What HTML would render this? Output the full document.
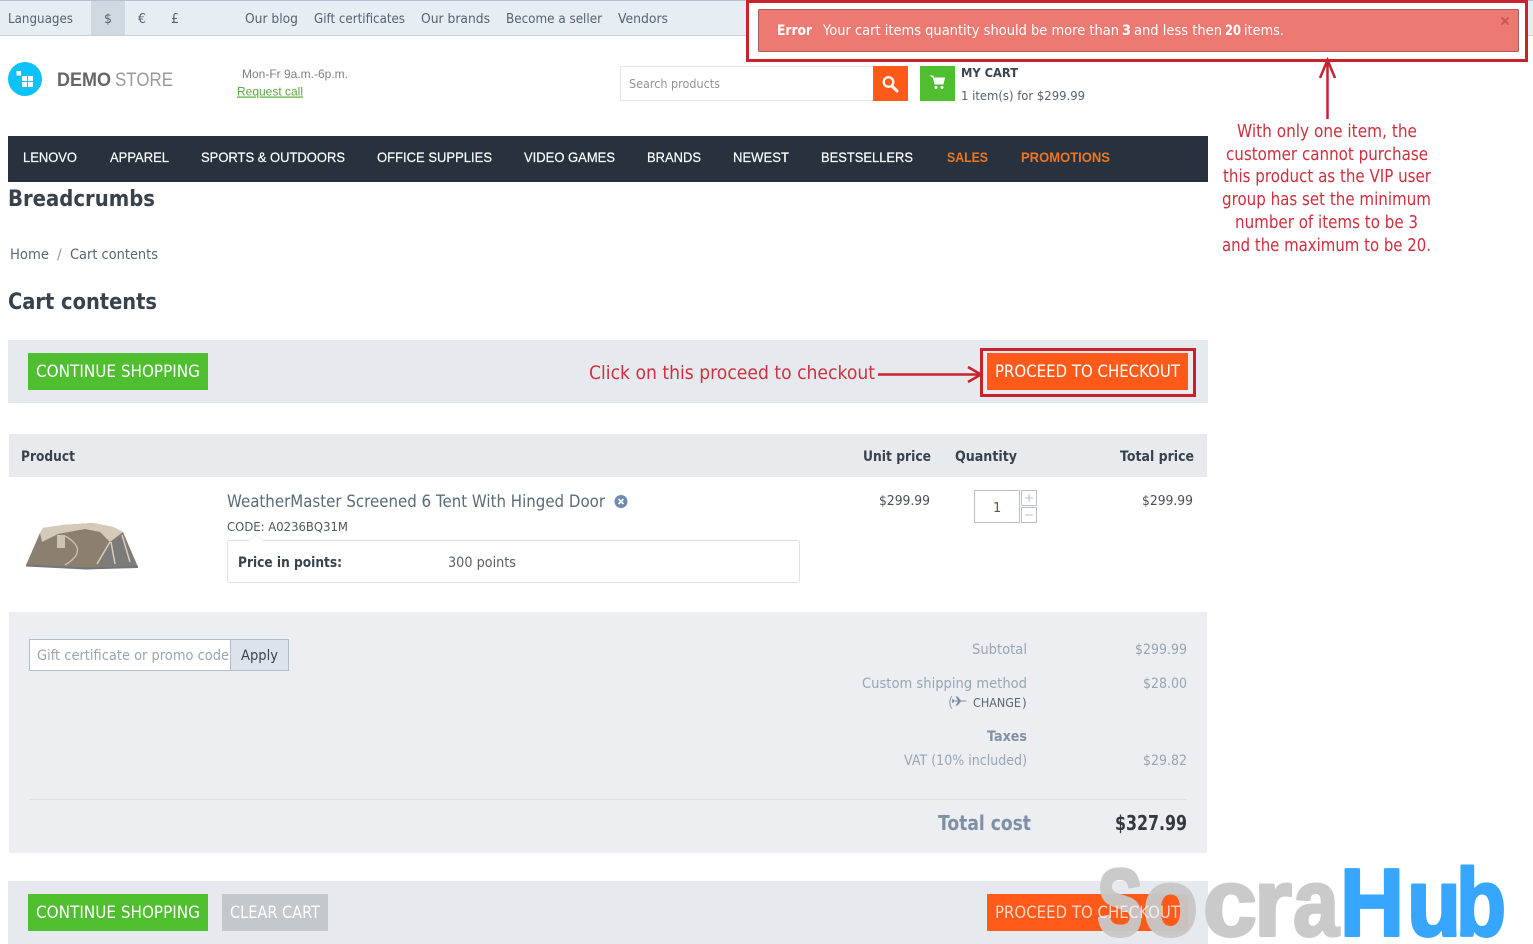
<!DOCTYPE html>
<html lang="en"><head><meta charset="utf-8"><title>Cart contents</title>
<style>
html,body{margin:0;padding:0;background:#fff;width:1533px;height:944px;overflow:hidden}
svg{display:block}
text{font-family:"DejaVu Sans",sans-serif;white-space:pre}
.l{font-family:"Liberation Sans",sans-serif}
.t{font-size:13px;fill:#56626e}
.n{font-family:"Liberation Sans",sans-serif;font-size:14px;fill:#fff;stroke:#fff;stroke-width:.2px}
.o{fill:#f0761e;stroke:#f0761e;font-weight:bold;stroke-width:0}
.b{font-weight:bold}
.btn{font-size:17px;fill:#fff}
.th{font-size:14px;font-weight:bold;fill:#37424c}
.s{font-size:14px;fill:#99a5b3}
.a{font-size:18px;fill:#cf2f3e}
.e{font-size:14px;fill:#fff}
.wm text{font-family:"Liberation Sans",sans-serif;font-size:96px;font-weight:bold;stroke-width:3px;stroke-linejoin:round}
.g text{fill:#c8c8c8;stroke:#c8c8c8}
.h text{fill:#36a6ff;stroke:#36a6ff}
</style></head><body>
<svg width="1533" height="944" viewBox="0 0 1533 944" xmlns="http://www.w3.org/2000/svg">
<!-- top bar -->
<rect x="0" y="0" width="1533" height="36" fill="#e6eef4"/>
<rect x="0" y="0" width="1533" height="1" fill="#b6c2d6"/>
<rect x="0" y="35" width="1533" height="1" fill="#c6d1dd"/>
<rect x="91" y="1" width="34" height="34" fill="#cfd9e2"/>
<text class="t" x="8" y="23" textLength="65" lengthAdjust="spacingAndGlyphs">Languages</text>
<text class="t" x="104" y="23" textLength="8" lengthAdjust="spacingAndGlyphs">$</text>
<text class="t" x="138" y="23" textLength="8" lengthAdjust="spacingAndGlyphs">€</text>
<text class="t" x="171" y="23" textLength="8" lengthAdjust="spacingAndGlyphs">£</text>
<text class="t" x="245" y="23" textLength="53" lengthAdjust="spacingAndGlyphs">Our blog</text>
<text class="t" x="314" y="23" textLength="91" lengthAdjust="spacingAndGlyphs">Gift certificates</text>
<text class="t" x="421" y="23" textLength="69" lengthAdjust="spacingAndGlyphs">Our brands</text>
<text class="t" x="506" y="23" textLength="96" lengthAdjust="spacingAndGlyphs">Become a seller</text>
<text class="t" x="618" y="23" textLength="50" lengthAdjust="spacingAndGlyphs">Vendors</text>

<!-- logo -->
<circle cx="25" cy="79" r="17" fill="#0cc2f8"/>
<rect x="16.500" y="71" width="4.500" height="4.500" fill="#fff"/>
<rect x="22" y="76" width="5" height="5" fill="#fff"/><rect x="28" y="76" width="5" height="5" fill="#fff"/>
<rect x="22" y="82" width="5" height="5" fill="#fff"/><rect x="28" y="82" width="5" height="5" fill="#fff"/>
<text class="l b" x="57" y="86" font-size="19" fill="#666" textLength="54" lengthAdjust="spacingAndGlyphs">DEMO</text>
<text class="l" x="115" y="86" font-size="19" fill="#9a9a9a" textLength="58" lengthAdjust="spacingAndGlyphs">STORE</text>
<text class="l" x="242" y="78" font-size="12" fill="#808080" textLength="106" lengthAdjust="spacingAndGlyphs">Mon-Fr 9a.m.-6p.m.</text>
<text class="l" x="237" y="95.500" font-size="12" fill="#58a83a" text-decoration="underline" textLength="66" lengthAdjust="spacingAndGlyphs">Request call</text>

<!-- search -->
<rect x="620.500" y="66.500" width="253" height="34" fill="#fff" stroke="#e4e6e8"/>
<text x="629" y="88" font-size="12.500" fill="#8d969e" textLength="91" lengthAdjust="spacingAndGlyphs">Search products</text>
<rect x="873" y="66" width="35" height="35" fill="#ff5a19"/>
<circle cx="888.500" cy="82" r="4.800" fill="none" stroke="#fff" stroke-width="2.300"/>
<path d="M892 86l5 5" stroke="#fff" stroke-width="3" stroke-linecap="round"/>
<rect x="920" y="66" width="35" height="35" fill="#4fbe2f"/>
<path d="M931 76h2l2 8h8l1.500-6h-10.500z" fill="#fff" stroke="#fff" stroke-width="1"/>
<circle cx="936" cy="87.500" r="1.500" fill="#fff"/><circle cx="942" cy="87.500" r="1.500" fill="#fff"/>
<text x="961" y="77" font-size="12" font-weight="bold" fill="#3a444e" textLength="57" lengthAdjust="spacingAndGlyphs">MY CART</text>
<text x="961" y="100" font-size="12.500" fill="#56626e" textLength="124" lengthAdjust="spacingAndGlyphs">1 item(s) for $299.99</text>

<!-- nav -->
<rect x="8" y="136" width="1200" height="46" fill="#27323e"/>
<text class="n" x="23" y="162" textLength="54" lengthAdjust="spacingAndGlyphs">LENOVO</text>
<text class="n" x="110" y="162" textLength="59" lengthAdjust="spacingAndGlyphs">APPAREL</text>
<text class="n" x="201" y="162" textLength="144" lengthAdjust="spacingAndGlyphs">SPORTS &amp; OUTDOORS</text>
<text class="n" x="377" y="162" textLength="115" lengthAdjust="spacingAndGlyphs">OFFICE SUPPLIES</text>
<text class="n" x="524" y="162" textLength="91" lengthAdjust="spacingAndGlyphs">VIDEO GAMES</text>
<text class="n" x="647" y="162" textLength="54" lengthAdjust="spacingAndGlyphs">BRANDS</text>
<text class="n" x="733" y="162" textLength="56" lengthAdjust="spacingAndGlyphs">NEWEST</text>
<text class="n" x="821" y="162" textLength="92" lengthAdjust="spacingAndGlyphs">BESTSELLERS</text>
<text class="n o" x="947" y="162" textLength="41" lengthAdjust="spacingAndGlyphs">SALES</text>
<text class="n o" x="1021" y="162" textLength="89" lengthAdjust="spacingAndGlyphs">PROMOTIONS</text>

<!-- headings -->
<text x="8" y="206" font-size="22.500" font-weight="bold" fill="#37424c" textLength="147" lengthAdjust="spacingAndGlyphs">Breadcrumbs</text>
<text x="10" y="259" font-size="14" fill="#5a6772" textLength="39" lengthAdjust="spacingAndGlyphs">Home</text>
<text x="57" y="259" font-size="14" fill="#8b96a0">/</text>
<text x="70" y="259" font-size="14" fill="#5a6772" textLength="88" lengthAdjust="spacingAndGlyphs">Cart contents</text>
<text x="8" y="309" font-size="22.500" font-weight="bold" fill="#37424c" textLength="149" lengthAdjust="spacingAndGlyphs">Cart contents</text>

<!-- top action bar -->
<rect x="8" y="340" width="1200" height="63" fill="#e6eaee"/>
<rect x="28" y="353" width="180" height="37" fill="#4fbe2f"/>
<text class="btn" x="36" y="377" textLength="164" lengthAdjust="spacingAndGlyphs">CONTINUE SHOPPING</text>
<rect x="981" y="349" width="214" height="47" fill="#f0eaea"/>
<rect x="987" y="353" width="201" height="37" fill="#ff5a19"/>
<text class="btn" x="995" y="377" textLength="185" lengthAdjust="spacingAndGlyphs">PROCEED TO CHECKOUT</text>
<rect x="981.500" y="349.500" width="213" height="46" fill="none" stroke="#c8222f" stroke-width="3"/>
<text x="589" y="379" font-size="19" fill="#cf2f3e" textLength="286" lengthAdjust="spacingAndGlyphs">Click on this proceed to checkout</text>
<path d="M878 374.500h103" stroke="#c8222f" stroke-width="2.500"/>
<path d="M968 367l13 7.500-13 7.500" fill="none" stroke="#c8222f" stroke-width="2.500"/>

<!-- table -->
<rect x="9" y="434" width="1198" height="43" fill="#e8ebee"/>
<text class="th" x="21" y="461" textLength="54" lengthAdjust="spacingAndGlyphs">Product</text>
<text class="th" x="863" y="461" textLength="68" lengthAdjust="spacingAndGlyphs">Unit price</text>
<text class="th" x="955" y="461" textLength="62" lengthAdjust="spacingAndGlyphs">Quantity</text>
<text class="th" x="1120" y="461" textLength="74" lengthAdjust="spacingAndGlyphs">Total price</text>

<!-- tent -->
<path d="M26 565L40 533 43 528 63 525 93 523 113 527 123 532 138 567 80 568z" fill="#8b7f6f"/>
<path d="M40 533L43 528 63 525 93 523 113 527 123 532 110 542 100 532 85 529 58 534 42 542z" fill="#d3cab9"/>
<path d="M98 566L110 542 122 534 138 567z" fill="#7c7b78"/>
<path d="M57 535h8v13h-8z" fill="#cdc3b1"/>
<path d="M65 536q25 14 0 29" fill="none" stroke="#cdc2ad" stroke-width="1.300"/>
<path d="M97 564l13-22M115 564l-4-22M130 562l-8-27" stroke="#d6cdbd" stroke-width="1.500" fill="none"/>
<path d="M26 565.500l30 1.500 30 1.500 52-1.500" stroke="#70767c" stroke-width="2" fill="none"/>

<!-- product -->
<text x="227" y="507" font-size="16.500" fill="#5c6b78" textLength="378" lengthAdjust="spacingAndGlyphs">WeatherMaster Screened 6 Tent With Hinged Door</text>
<circle cx="621" cy="501.500" r="6.500" fill="#6d8aad"/>
<path d="M618.500 499l5 5M623.500 499l-5 5" stroke="#fff" stroke-width="1.600"/>
<text x="227" y="531" font-size="12.500" fill="#4e5963" textLength="121" lengthAdjust="spacingAndGlyphs">CODE: A0236BQ31M</text>
<rect x="227.500" y="540.500" width="572" height="42" rx="2" fill="#fff" stroke="#dfe2e5"/>
<path d="M249 540.500l7-6 7 6" fill="#fff" stroke="#eceef0"/>
<rect x="250" y="540" width="12" height="1.500" fill="#fff"/>
<text x="238" y="567" font-size="14" font-weight="bold" fill="#37424c" textLength="104" lengthAdjust="spacingAndGlyphs">Price in points:</text>
<text x="448" y="567" font-size="14" fill="#56626e" textLength="68" lengthAdjust="spacingAndGlyphs">300 points</text>
<text x="879" y="505" font-size="13.500" fill="#46515b" textLength="51" lengthAdjust="spacingAndGlyphs">$299.99</text>
<text x="1142" y="505" font-size="13.500" fill="#46515b" textLength="51" lengthAdjust="spacingAndGlyphs">$299.99</text>
<rect x="974.500" y="490.500" width="45" height="32" fill="#fff" stroke="#b4c2cc"/>
<text x="993" y="512" font-size="13" fill="#5e5a3a">1</text>
<rect x="1021.500" y="490.500" width="15" height="15" fill="#fff" stroke="#b4c2cc"/>
<rect x="1021.500" y="507.500" width="15" height="15" fill="#fff" stroke="#b4c2cc"/>
<path d="M1029 494v8M1025 498h8M1025 515h8" stroke="#b4c2cc" stroke-width="1"/>

<!-- summary -->
<rect x="9" y="612" width="1198" height="241" fill="#eceef1"/>
<rect x="29.500" y="639.500" width="259" height="31" fill="#fff" stroke="#b0bfcc"/>
<rect x="231" y="640" width="57" height="30" fill="#dce3ea"/>
<rect x="230" y="640" width="1" height="30" fill="#b0bfcc"/>
<text x="37" y="660" font-size="14" fill="#9aa5ae" textLength="192" lengthAdjust="spacingAndGlyphs">Gift certificate or promo code</text>
<text x="241" y="660" font-size="14" fill="#39444e" textLength="37" lengthAdjust="spacingAndGlyphs">Apply</text>
<text class="s" x="972" y="654" textLength="55" lengthAdjust="spacingAndGlyphs">Subtotal</text>
<text class="s" x="1135" y="654" textLength="52" lengthAdjust="spacingAndGlyphs">$299.99</text>
<text class="s" x="862" y="688" textLength="165" lengthAdjust="spacingAndGlyphs">Custom shipping method</text>
<text class="s" x="1143" y="688" textLength="44" lengthAdjust="spacingAndGlyphs">$28.00</text>
<text class="s" x="948" y="707" font-size="12">(</text>
<path d="M954 700.500h4l-2.500-4h2l3.500 4h5q1.500.5 0 1h-5l-3.500 4h-2l2.500-4h-4l-.8 1.500h-1v-4h1z" fill="#7d8ca3"/>
<text x="973" y="707" font-size="12" fill="#5a6772" textLength="48" lengthAdjust="spacingAndGlyphs">CHANGE</text>
<text x="1022" y="707" font-size="12" fill="#5a6772">)</text>
<text class="s b" x="987" y="741" textLength="40" lengthAdjust="spacingAndGlyphs" style="fill:#7f90a6">Taxes</text>
<text class="s" x="904" y="765" textLength="123" lengthAdjust="spacingAndGlyphs">VAT (10% included)</text>
<text class="s" x="1143" y="765" textLength="44" lengthAdjust="spacingAndGlyphs">$29.82</text>
<rect x="29" y="799" width="1158" height="1" fill="#dcdfe3"/>
<text x="938" y="830" font-size="20" font-weight="bold" fill="#7f90a6" textLength="93" lengthAdjust="spacingAndGlyphs">Total cost</text>
<text x="1115" y="830" font-size="20" font-weight="bold" fill="#333a40" textLength="72" lengthAdjust="spacingAndGlyphs">$327.99</text>

<!-- bottom bar -->
<rect x="8" y="881" width="1200" height="63" fill="#e6eaee"/>
<rect x="28" y="894" width="180" height="37" fill="#4fbe2f"/>
<text class="btn" x="36" y="918" textLength="164" lengthAdjust="spacingAndGlyphs">CONTINUE SHOPPING</text>
<rect x="222" y="894" width="106" height="37" fill="#c2c8cc"/>
<text class="btn" x="230" y="918" textLength="90" lengthAdjust="spacingAndGlyphs">CLEAR CART</text>
<rect x="987" y="894" width="201" height="37" fill="#ff5a19"/>

<!-- error notice -->
<rect x="747.500" y="1.500" width="779" height="59" fill="#fff" stroke="#c8222f" stroke-width="3"/>
<rect x="758.500" y="9.500" width="760" height="42" rx="1" fill="#ec7a72" stroke="#a9605b"/>
<text class="e b" x="777" y="35" textLength="35" lengthAdjust="spacingAndGlyphs">Error</text>
<text class="e" x="823" y="35" textLength="296" lengthAdjust="spacingAndGlyphs">Your cart items quantity should be more than</text>
<text class="e b" x="1122" y="35" textLength="9" lengthAdjust="spacingAndGlyphs">3</text>
<text class="e" x="1134" y="35" textLength="88" lengthAdjust="spacingAndGlyphs">and less then</text>
<text class="e b" x="1225" y="35" textLength="16" lengthAdjust="spacingAndGlyphs">20</text>
<text class="e" x="1244" y="35" textLength="40" lengthAdjust="spacingAndGlyphs">items.</text>
<path d="M1501.500 17.500l7 7M1508.500 17.500l-7 7" stroke="#c9534e" stroke-width="1.800"/>

<!-- annotation -->
<path d="M1327.500 119V62" stroke="#c8222f" stroke-width="2.500"/>
<path d="M1320 78l7.500-18 7.500 18" fill="none" stroke="#c8222f" stroke-width="2.500"/>
<text class="a" x="1237" y="137" textLength="180" lengthAdjust="spacingAndGlyphs">With only one item, the</text>
<text class="a" x="1226" y="160" textLength="202" lengthAdjust="spacingAndGlyphs">customer cannot purchase</text>
<text class="a" x="1223" y="182" textLength="208" lengthAdjust="spacingAndGlyphs">this product as the VIP user</text>
<text class="a" x="1222" y="205" textLength="209" lengthAdjust="spacingAndGlyphs">group has set the minimum</text>
<text class="a" x="1235" y="228" textLength="183" lengthAdjust="spacingAndGlyphs">number of items to be 3</text>
<text class="a" x="1222" y="251" textLength="209" lengthAdjust="spacingAndGlyphs">and the maximum to be 20.</text>

<!-- watermark -->
<g class="wm g" opacity=".95">
<text x="1097" y="935.500" textLength="46" lengthAdjust="spacingAndGlyphs">S</text>
<text x="1143" y="935.500" textLength="55" lengthAdjust="spacingAndGlyphs">o</text>
<text x="1203" y="935.500" textLength="54" lengthAdjust="spacingAndGlyphs">c</text>
<text x="1254" y="935.500" textLength="38" lengthAdjust="spacingAndGlyphs">r</text>
<text x="1293" y="935.500" textLength="46" lengthAdjust="spacingAndGlyphs">a</text>
</g>
<g class="wm h">
<text x="1340" y="935.500" textLength="64" lengthAdjust="spacingAndGlyphs">H</text>
<text x="1407" y="935.500" textLength="54" lengthAdjust="spacingAndGlyphs">u</text>
<text x="1456" y="935.500" textLength="50" lengthAdjust="spacingAndGlyphs">b</text>
</g>
<text class="btn" x="995" y="918" textLength="185" lengthAdjust="spacingAndGlyphs" fill-opacity=".75">PROCEED TO CHECKOUT</text>
</svg>
</body></html>
